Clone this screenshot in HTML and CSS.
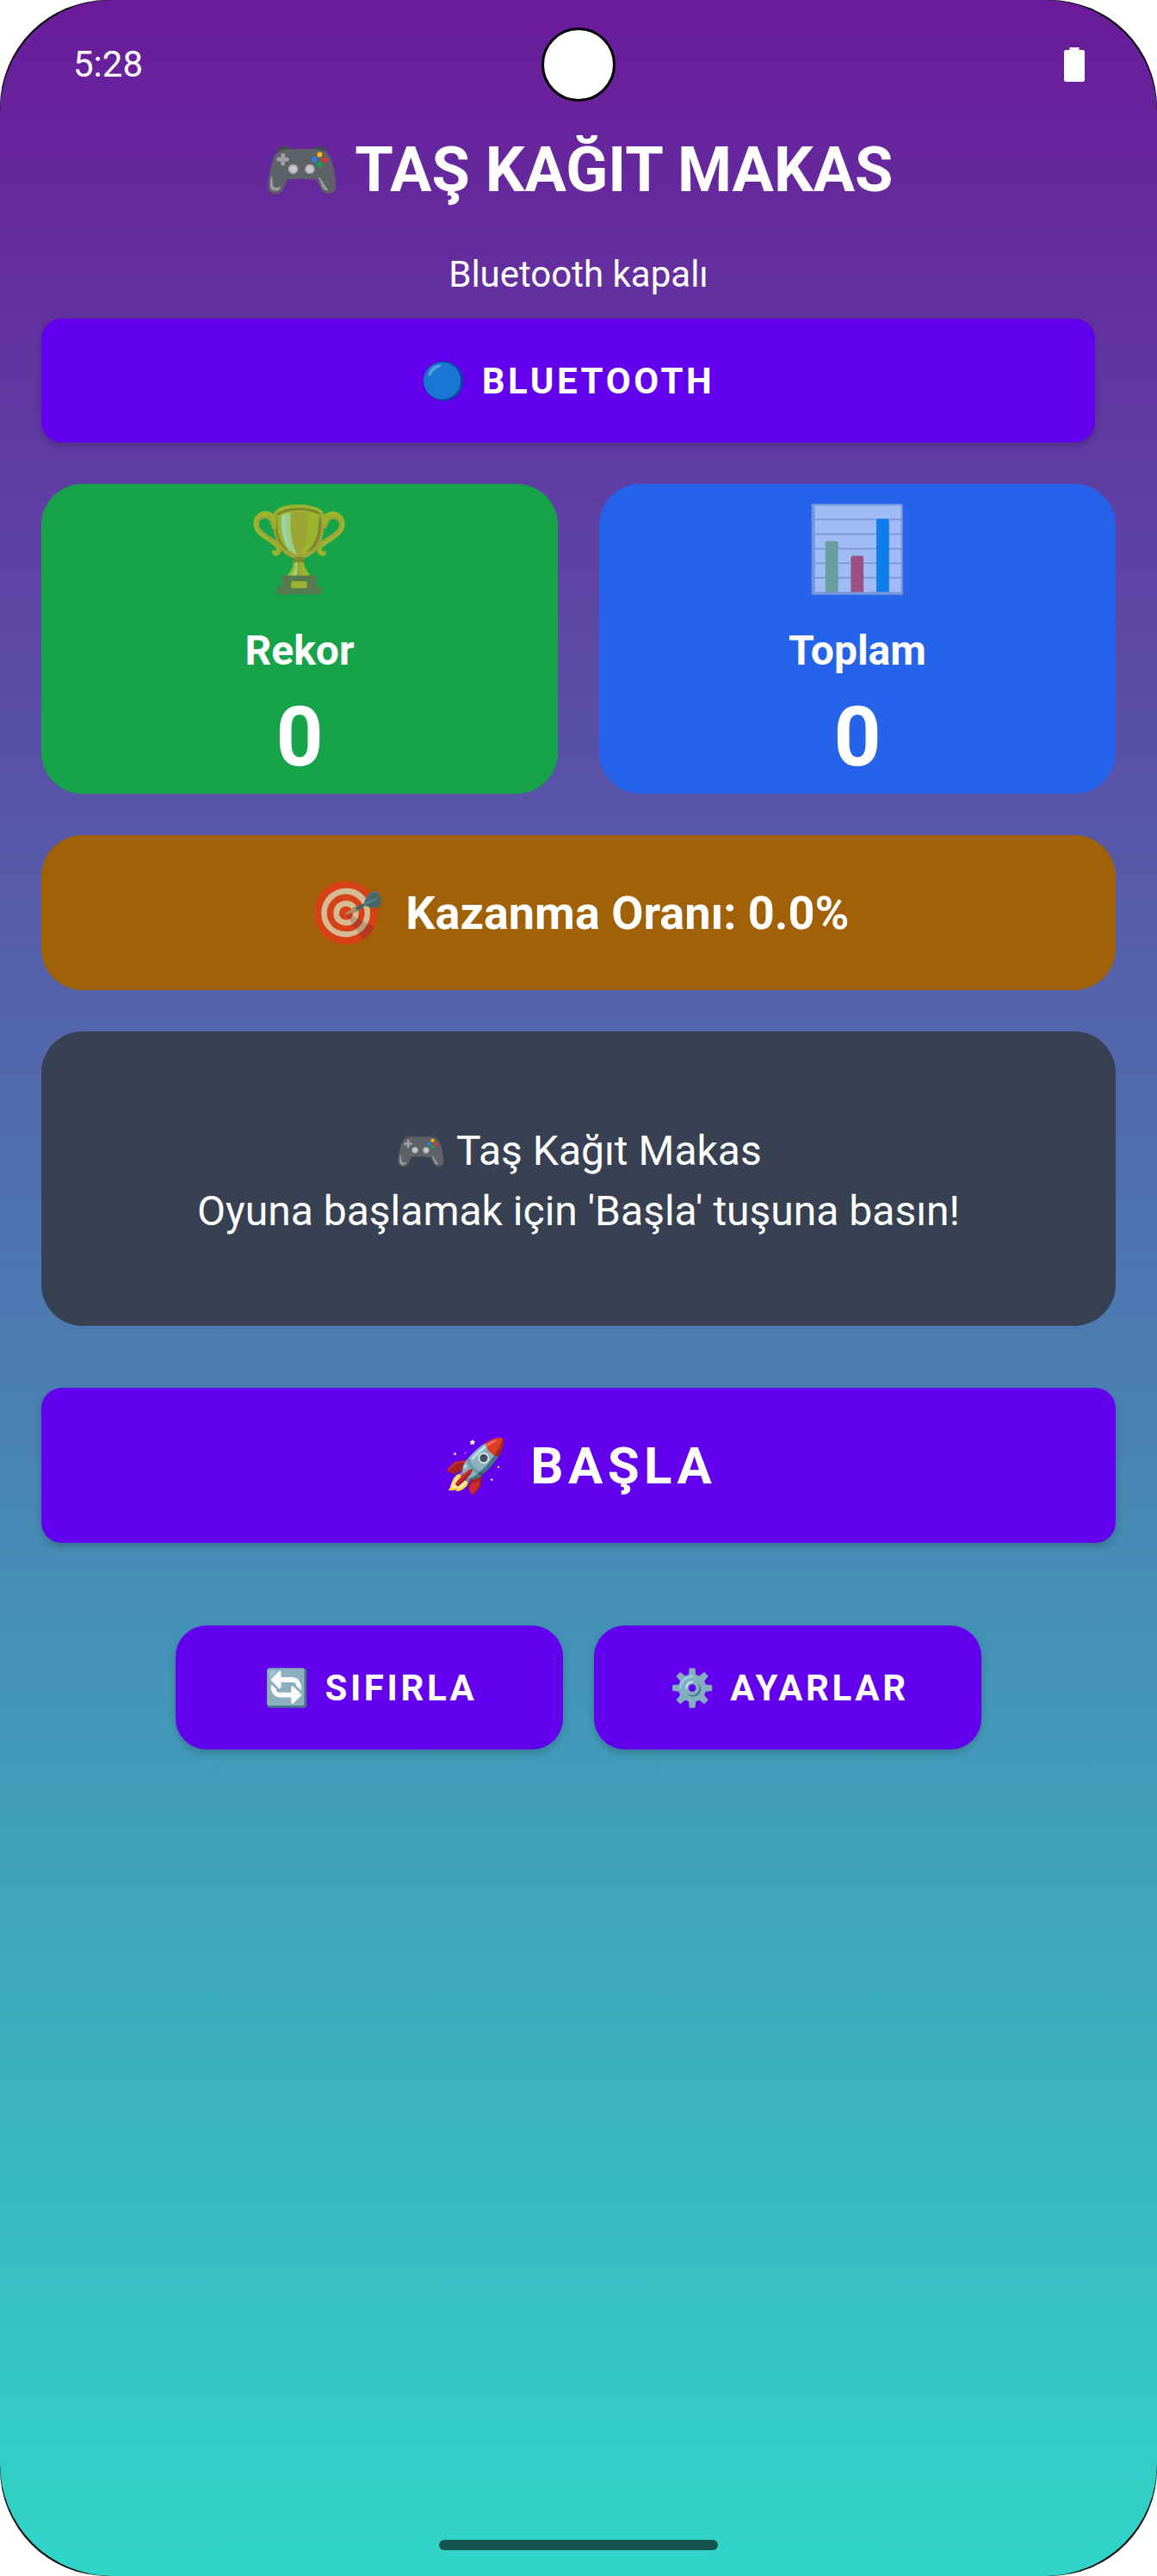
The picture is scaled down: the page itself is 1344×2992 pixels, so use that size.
FILE: index.html
```
<!DOCTYPE html>
<html lang="tr">
<head>
<meta charset="utf-8">
<title>Taş Kağıt Makas</title>
<link rel="stylesheet" href="styles.css">
</head>
<body>
<div class="phone">
  <div class="screen">
    <div class="status">
      <span class="time">5:28</span>
      <svg class="battery" viewBox="0 0 24 40" aria-hidden="true"><path d="M6.5 0h11v3h4a2.5 2.5 0 0 1 2.5 2.5v32a2.5 2.5 0 0 1-2.5 2.5h-19A2.5 2.5 0 0 1 0 37.500v-32A2.500 2.500 0 0 1 2.500 3h4z"/></svg>
    </div>
    <div class="camera"></div>
    <main class="content">
      <h1 class="title">🎮 TAŞ KAĞIT MAKAS</h1>
      <p class="bt-state">Bluetooth kapalı</p>
      <button class="btn btn-bt">🔵 BLUETOOTH</button>
      <section class="stats">
        <div class="stat stat-green">
          <span class="stat-icon dim">🏆</span>
          <span class="stat-label">Rekor</span>
          <span class="stat-value">0</span>
        </div>
        <div class="stat stat-blue">
          <span class="stat-icon dim">📊</span>
          <span class="stat-label">Toplam</span>
          <span class="stat-value">0</span>
        </div>
      </section>
      <div class="rate"><span class="rate-icon dim">🎯</span><span>Kazanma Oranı: 0.0%</span></div>
      <div class="message">🎮 Taş Kağıt Makas<br>Oyuna başlamak için 'Başla' tuşuna basın!</div>
      <button class="btn btn-start">🚀 BAŞLA</button>
      <div class="actions">
        <button class="btn btn-small">🔄 SIFIRLA</button>
        <button class="btn btn-small">⚙️ AYARLAR</button>
      </div>
    </main>
    <div class="home"></div>
  </div>
</div>
</body>
</html>
```
FILE: styles.css
```
* { box-sizing: border-box; }
html, body { margin: 0; padding: 0; background: #fff; }
body { font-family: Roboto, "Noto Color Emoji", sans-serif; color: #fff; }
.phone { position: relative; width: 1344px; height: 2992px; background: #000; border-radius: 125px; overflow: hidden; }
.screen { position: relative; height: 100%; display: flex; flex-direction: column; border-radius: 130px; overflow: hidden; background: linear-gradient(180deg, #6a1b9a 0%, #30d5c8 100%); }
.status { height: 150px; padding: 52px 84px 0 85px; display: flex; justify-content: space-between; align-items: flex-start; flex: none; }
.time { font-size: 42px; line-height: 46px; }
.battery { width: 24px; height: 40px; margin-top: 3px; fill: #fff; }
.camera { position: absolute; left: 629px; top: 32px; width: 86px; height: 86px; border-radius: 50%; background: #fff; border: 3px solid #000; }
.content { flex: 1; padding: 0 48px; display: flex; flex-direction: column; align-items: stretch; }
.title { margin: 0; font-size: 72px; line-height: 96px; font-weight: 700; text-align: center; }
.bt-state { margin: 48px 0 0; font-size: 42px; line-height: 50px; text-align: center; }
.btn { display: block; border: 0; color: #fff; background: #6200ee; font-family: inherit; font-weight: 700; box-shadow: 0 4px 8px rgba(0,0,0,.2); }
.btn-bt { width: 1224px; height: 144px; margin-top: 26px; border-radius: 24px; font-size: 42px; letter-spacing: 3.6px; }
.stats { margin-top: 48px; display: grid; grid-template-columns: 600px 600px; column-gap: 48px; }
.stat { height: 360px; border-radius: 48px; display: flex; flex-direction: column; align-items: center; }
.stat-green { background: #16a34a; }
.stat-blue { background: #2563eb; }
.stat-icon { font-size: 96px; line-height: 132px; margin-top: 10px; }
.stat-label { margin-top: 24px; font-size: 48px; line-height: 56px; font-weight: 700; }
.stat-value { margin-top: 16px; font-size: 96px; line-height: 112px; font-weight: 700; }
.dim { opacity: .57; }
.rate { margin-top: 48px; height: 180px; border-radius: 48px; background: #a16207; display: flex; justify-content: center; align-items: center; font-size: 54px; font-weight: 700; }
.rate-icon { font-size: 72px; margin-right: 24px; }
.message { margin-top: 48px; height: 342px; padding-top: 104px; border-radius: 48px; background: #374151; text-align: center; font-size: 48px; line-height: 70px; }
.btn-start { width: 100%; height: 180px; margin-top: 72px; padding-left: 10px; border-radius: 24px; font-size: 60px; letter-spacing: 5.4px; }
.actions { margin-top: 96px; display: flex; justify-content: center; gap: 36px; }
.btn-small { width: 450px; height: 144px; padding-left: 10px; border-radius: 36px; font-size: 42px; letter-spacing: 3.6px; }
.home { position: absolute; left: 510px; top: 2950px; width: 324px; height: 12px; border-radius: 6px; background: #14544f; }
```
